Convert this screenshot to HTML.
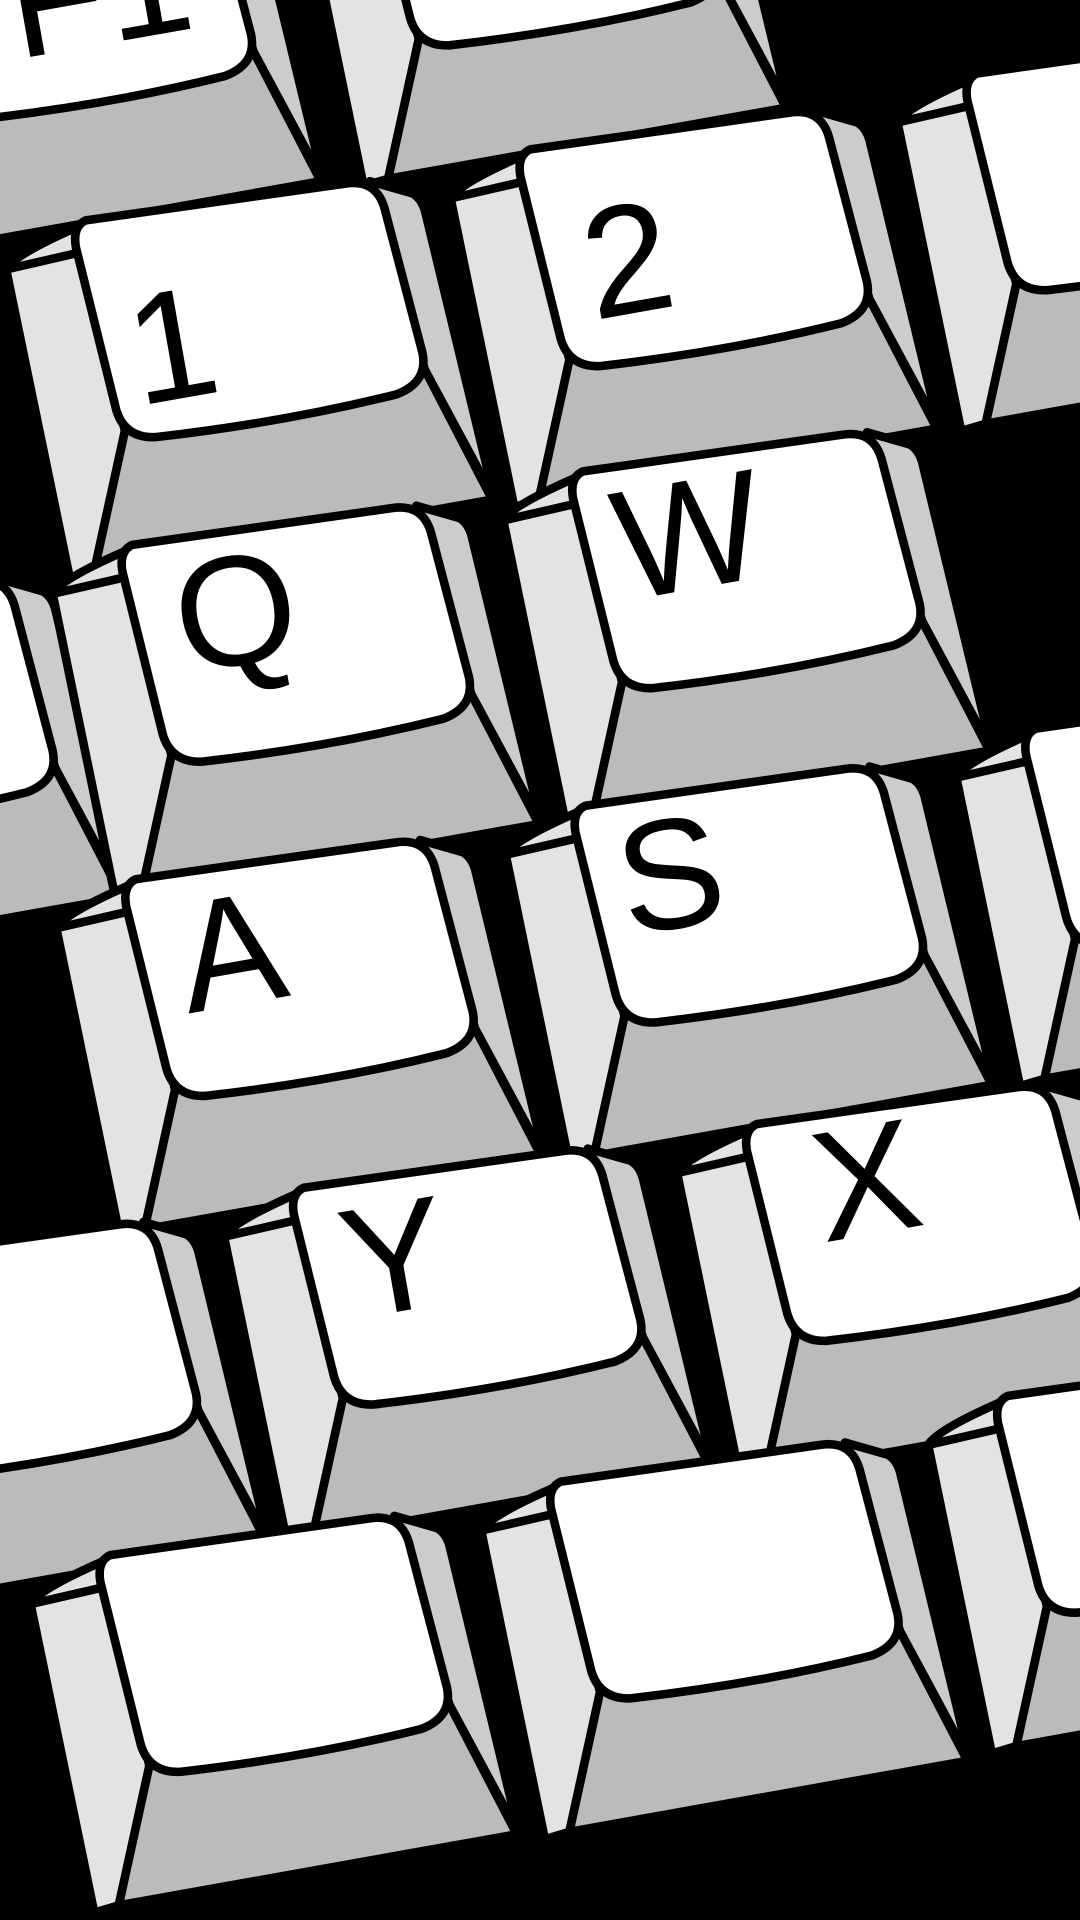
<!DOCTYPE html>
<html><head><meta charset="utf-8"><style>
html,body{margin:0;padding:0;background:#000;}
svg{display:block}
text{font-family:"Liberation Sans",sans-serif;font-weight:normal;}
</style></head><body>
<svg width="1080" height="1920" viewBox="0 0 882 1568" xmlns="http://www.w3.org/2000/svg">
<defs>
<g id="k" stroke="#000" stroke-width="7" stroke-linejoin="round">
  <path d="M -57,40 L -5,292 L 15,286 L 40,172 L 0,10 Z" fill="#e3e3e3"/>
  <path d="M 15,286 L 340,228 L 285,122 L 40,172 Z" fill="#bbbbbb"/>
  <path d="M 240,-32 L 275,-22 Q 282,-18 285,-8 L 342,228 L 285,122 Z" fill="#cccccc"/>
  <path d="M -57,40 Q -50,28 0,6 L 10,0 L 30,20 Z" fill="#e3e3e3"/>
  <path d="M 8,0 L 220,-30 Q 245,-34 252,-10 L 283,108 Q 288,132 262,142 Q 170,165 65,177 Q 40,178 33,155 L 0,22 Q -3,5 8,0 Z" fill="#fff"/>
</g>
</defs>
<rect width="882" height="1568" fill="#000"/>
<g font-size="128" text-anchor="middle">
<use href="#k" x="302" y="-140"/>
<use href="#k" x="-78" y="-80"/>
<text x="80" y="36" transform="rotate(-10 80 -10)">F1</text>
<use href="#k" x="790" y="60"/>
<use href="#k" x="425" y="122"/>
<text x="512" y="256" transform="rotate(-10 512 210)">2</text>
<use href="#k" x="62" y="180"/>
<text x="140" y="326" transform="rotate(-10 140 280)">1</text>
<use href="#k" x="468" y="385"/>
<text x="562" y="481" transform="rotate(-10 562 435)">W</text>
<use href="#k" x="-240" y="505"/>
<use href="#k" x="100" y="445"/>
<text x="192" y="543" transform="rotate(-10 192 497)">Q</text>
<use href="#k" x="838" y="595"/>
<use href="#k" x="470" y="658"/>
<text x="547" y="758" transform="rotate(-10 547 712)">S</text>
<use href="#k" x="103" y="718"/>
<text x="188" y="821" transform="rotate(-10 188 775)">A</text>
<use href="#k" x="610" y="918"/>
<text x="707" y="1008" transform="rotate(-10 707 962)">X</text>
<use href="#k" x="240" y="970"/>
<text x="322" y="1071" transform="rotate(-10 322 1025)">Y</text>
<use href="#k" x="-123" y="1030"/>
<use href="#k" x="815" y="1140"/>
<use href="#k" x="450" y="1210"/>
<use href="#k" x="82" y="1270"/>
</g>
</svg>
</body></html>
